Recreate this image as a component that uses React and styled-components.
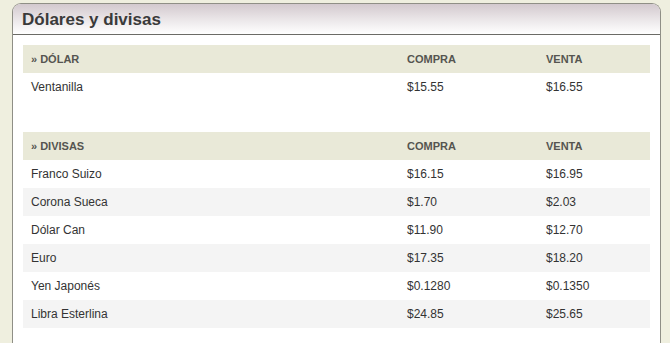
import React from "react";
import styled, { createGlobalStyle } from "styled-components";

const Global = createGlobalStyle`
  html, body { margin: 0; padding: 0; }
  body {
    background: #efefdf;
    font-family: "Liberation Sans", Arial, sans-serif;
    color: #333;
  }
`;

const Page = styled.div`
  padding: 3px 9px 0 12px;
`;

const Box = styled.div`
  border: 1px solid #8f8f86;
  border-bottom: none;
  border-radius: 9px 9px 0 0;
  background: #fff;
  height: 340px;
  box-sizing: border-box;
  overflow: hidden;
`;

const Header = styled.div`
  height: 30px;
  border-bottom: 1px solid #6b6b66;
  background: linear-gradient(to bottom, #d3c9ce 0%, #ece8ea 55%, #ffffff 100%);
  display: flex;
  align-items: center;
  padding-left: 9px;
`;

const Title = styled.h2`
  margin: 0;
  font-size: 17px;
  font-weight: bold;
  color: #3a3a3a;
  padding-top: 1px;
`;

const Body = styled.div`
  padding: 10px 10px 0 10px;
  display: flex;
  flex-direction: column;
  gap: 31px;
`;

const Table = styled.div`
  display: flex;
  flex-direction: column;
`;

const Row = styled.div`
  display: grid;
  grid-template-columns: 376px 139px 1fr;
  height: 28px;
  align-items: center;
  background: ${(p) => (p.$head ? "#e9e9d8" : p.$alt ? "#f4f4f4" : "#fff")};
  font-size: ${(p) => (p.$head ? "11px" : "12px")};
  font-weight: ${(p) => (p.$head ? "bold" : "normal")};
  color: ${(p) => (p.$head ? "#555550" : "#333")};
`;

const Cell = styled.div`
  padding-left: 8px;
`;

const sections = [
  {
    title: "» DÓLAR",
    rows: [["Ventanilla", "$15.55", "$16.55"]],
  },
  {
    title: "» DIVISAS",
    rows: [
      ["Franco Suizo", "$16.15", "$16.95"],
      ["Corona Sueca", "$1.70", "$2.03"],
      ["Dólar Can", "$11.90", "$12.70"],
      ["Euro", "$17.35", "$18.20"],
      ["Yen Japonés", "$0.1280", "$0.1350"],
      ["Libra Esterlina", "$24.85", "$25.65"],
    ],
  },
];

export default function App() {
  return (
    <>
      <Global />
      <Page>
        <Box>
          <Header>
            <Title>Dólares y divisas</Title>
          </Header>
          <Body>
            {sections.map((s) => (
              <Table key={s.title}>
                <Row $head>
                  <Cell>{s.title}</Cell>
                  <Cell>COMPRA</Cell>
                  <Cell>VENTA</Cell>
                </Row>
                {s.rows.map((r, i) => (
                  <Row key={r[0]} $alt={i % 2 === 1}>
                    <Cell>{r[0]}</Cell>
                    <Cell>{r[1]}</Cell>
                    <Cell>{r[2]}</Cell>
                  </Row>
                ))}
              </Table>
            ))}
          </Body>
        </Box>
      </Page>
    </>
  );
}
